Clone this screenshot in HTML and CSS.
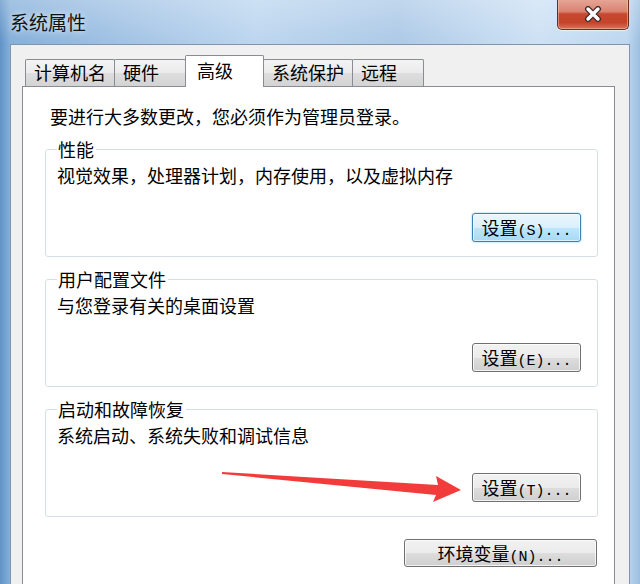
FILE: index.html
```html
<!DOCTYPE html>
<html lang="zh">
<head>
    <meta charset="UTF-8">
    <title>系统属性</title>
    <link rel="stylesheet" href="styles.css">
</head>
<body>
  <div class="window">
    <!-- 标题栏 -->
    <div class="titlebar">
      <span class="title">系统属性</span>
      <button class="close">
        <svg width="18" height="16" viewBox="0 0 18 16">
          <path d="M4 3 L14 13 M14 3 L4 13" stroke="#3b2b2b" stroke-width="6" stroke-linecap="round"/>
          <path d="M4 3 L14 13 M14 3 L4 13" stroke="#ffffff" stroke-width="3.4" stroke-linecap="round"/>
        </svg>
      </button>
    </div>

    <div class="client">
      <!-- 选项卡 -->
      <div class="tabs">
        <div class="tab">计算机名</div>
        <div class="tab">硬件</div>
        <div class="tab active">高级</div>
        <div class="tab">系统保护</div>
        <div class="tab">远程</div>
      </div>

      <div class="panel">
        <p class="intro">要进行大多数更改，您必须作为管理员登录。</p>

        <fieldset class="group">
          <legend>性能</legend>
          <p class="desc">视觉效果，处理器计划，内存使用，以及虚拟内存</p>
          <div class="actions">
            <button class="btn focused">设置<span class="key">(S)...</span></button>
          </div>
        </fieldset>

        <fieldset class="group">
          <legend>用户配置文件</legend>
          <p class="desc">与您登录有关的桌面设置</p>
          <div class="actions">
            <button class="btn">设置<span class="key">(E)...</span></button>
          </div>
        </fieldset>

        <fieldset class="group">
          <legend>启动和故障恢复</legend>
          <p class="desc">系统启动、系统失败和调试信息</p>
          <div class="actions">
            <button class="btn">设置<span class="key">(T)...</span></button>
          </div>
        </fieldset>

        <div class="footer">
          <button class="btn wide">环境变量<span class="key">(N)...</span></button>
        </div>
      </div>
    </div>

    <!-- 红色箭头标注 -->
    <svg class="arrow" width="640" height="584" viewBox="0 0 640 584">
      <polygon points="222,472 438,485 436,476 461,490 433,502 436,495 222,474" fill="#f23c3c"/>
    </svg>
  </div>
</body>
</html>
```

FILE: styles.css
```css
/* 全局 */
body {
    margin: 0;
    padding: 0;
    font-family: "Noto Sans CJK SC", sans-serif;
    font-size: 18px;
    color: #000;
}

/* 窗口外框（Aero 玻璃） */
.window {
    position: relative;
    width: 640px;
    height: 584px;
    overflow: hidden;
    box-sizing: border-box;
    padding: 0 10px;
    display: flex;
    flex-direction: column;
    background:
        linear-gradient(rgba(255, 255, 255, 0.25), rgba(255, 255, 255, 0) 44px),
        linear-gradient(to right, #5f92c6 0, #85b0da 10px, #a5c5e6 22%, #bcd6ef 40%, #acc9e7 62%, #cde1f4 84%, #bcd7f0 98%, #9dbfe0 100%);
}

.titlebar {
    height: 44px;
    flex: none;
    display: flex;
    justify-content: space-between;
    align-items: flex-start;
}

.title {
    margin-top: 10px;
    font-size: 19px;
    line-height: 24px;
    color: #111;
    text-shadow: 0 0 6px rgba(255, 255, 255, 0.9);
}

/* 关闭按钮 */
.close {
    width: 72px;
    height: 31px;
    margin: -1px 1px 0 0;
    padding: 0;
    border: 1px solid #6d2a1f;
    border-top: none;
    border-radius: 0 0 5px 5px;
    display: flex;
    align-items: center;
    justify-content: center;
    background: linear-gradient(#e7a797 0%, #d98371 42%, #c8472f 50%, #c3432b 78%, #dc7258 100%);
    box-shadow: inset 0 0 0 1px rgba(255, 210, 200, 0.45), 0 1px 1px rgba(255, 255, 255, 0.6);
}

/* 客户区 */
.client {
    flex: 1;
    background: #f0f0f0;
    border: 1px solid #8194ab;
    border-bottom: none;
    padding: 10px 14px 0 11px;
    display: flex;
    flex-direction: column;
}

/* 选项卡 */
.tabs {
    display: flex;
    align-items: flex-end;
    padding-left: 3px;
    height: 31px;
    flex: none;
}

.tab {
    box-sizing: border-box;
    min-width: 72px;
    height: 27px;
    line-height: 25px;
    padding: 0 8px;
    margin-left: -1px;
    border: 1px solid #898c95;
    border-bottom: none;
    border-radius: 2px 2px 0 0;
    background: linear-gradient(#f3f3f3 0%, #ebebeb 50%, #dedede 51%, #d3d3d3 100%);
    white-space: nowrap;
}

.tab:first-child {
    margin-left: 0;
}

.tab.active {
    position: relative;
    z-index: 1;
    min-width: 79px;
    height: 32px;
    line-height: 28px;
    padding-left: 11px;
    margin-bottom: -1px;
    background: #fff;
}

/* 选项卡内容面板 */
.panel {
    flex: 1;
    background: #fff;
    border: 1px solid #898c95;
    border-bottom: none;
    padding: 18px 16px 0 22px;
}

.intro {
    margin: 0 0 11px 5px;
    line-height: 22px;
}

/* 分组框 */
.group {
    margin: 0 0 11px 0;
    padding: 4px 16px 14px 11px;
    border: 1px solid #d5dfe5;
    border-radius: 3px;
    min-width: 0;
}

.group legend {
    padding: 0 2px 0 1px;
    line-height: 22px;
}

.desc {
    margin: 0;
    line-height: 22px;
}

.actions {
    display: flex;
    justify-content: flex-end;
    margin-top: 27px;
}

/* 按钮 */
.btn {
    box-sizing: border-box;
    width: 109px;
    height: 29px;
    padding: 0;
    font-family: "Noto Sans CJK SC", sans-serif;
    font-size: 18px;
    line-height: 26px;
    color: #000;
    border: 1px solid #707070;
    border-radius: 3px;
    background: linear-gradient(#f2f2f2 0%, #ebebeb 50%, #dddddd 51%, #cfcfcf 100%);
    box-shadow: inset 0 0 0 1px rgba(255, 255, 255, 0.75);
}

.btn.focused {
    border-color: #3c7fb1;
    background: linear-gradient(#eaf6fd 0%, #d9f0fc 50%, #bee6fd 51%, #a7d9f5 100%);
    box-shadow: inset 0 0 0 1px rgba(255, 255, 255, 0.6), 0 0 2px #5fc4f0;
}

.key {
    font-family: "Liberation Mono", monospace;
    font-size: 15px;
}

.footer {
    display: flex;
    justify-content: flex-end;
    margin-top: 22px;
    padding-right: 1px;
}

.btn.wide {
    width: 193px;
    height: 28px;
}

/* 箭头标注 */
.arrow {
    position: absolute;
    left: 0;
    top: 0;
    pointer-events: none;
}
```
